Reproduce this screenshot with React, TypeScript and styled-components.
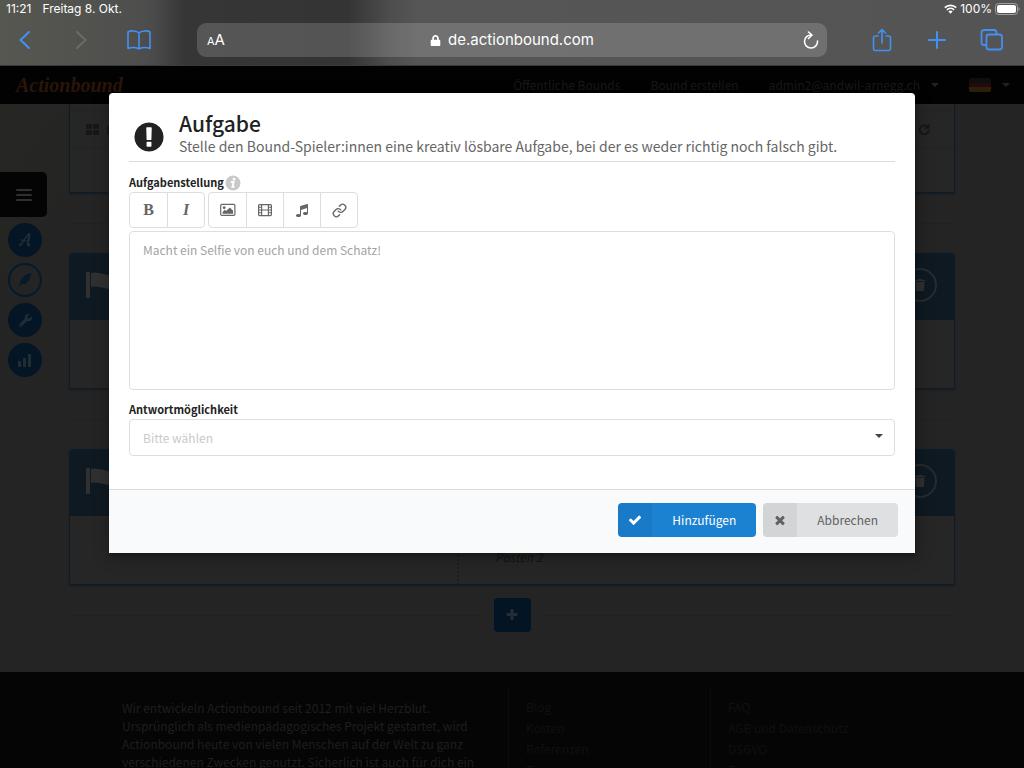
import React from 'react';
import styled, { createGlobalStyle, css } from 'styled-components';
import { FaLock, FaTrash, FaWrench } from 'react-icons/fa';
import { Link as ChainIcon } from 'lucide-react';

const sans = '"Noto Sans CJK SC", "Noto Sans", sans-serif';
const system = 'Inter, "Liberation Sans", sans-serif';

const GlobalStyle = createGlobalStyle`
  *, *::before, *::after { box-sizing: border-box; }
  body { margin: 0; background: #242424; font-family: ${sans}; font-size: 12px; }
  button, input, select, textarea { font: inherit; color: inherit; margin: 0; }
  button { cursor: pointer; padding: 0; border: 0; background: none; }
  a { color: inherit; text-decoration: none; }
  ul { list-style: none; margin: 0; padding: 0; }
  p, h1 { margin: 0; }
`;

const Screen = styled.div`
  display: flex;
  flex-direction: column;
  height: 100vh;
  overflow: hidden;
`;

/* ---------- browser chrome ---------- */

const Chrome = styled.header`
  flex: none;
  font-family: ${system};
  color: #fff;
  background: linear-gradient(
    90deg,
    #56574f 0%,
    #4f504e 13%,
    #4b4b4b 15%,
    #363636 18%,
    #343434 34%,
    #4c4d4c 38%,
    #555655 41%,
    #545454 100%
  );
  border-bottom: 1px solid #3a3a3a;
`;

const StatusBar = styled.div`
  display: flex;
  align-items: center;
  justify-content: space-between;
  height: 18px;
  padding: 0 4px 0 6px;
  font-size: 12px;
  line-height: 18px;
`;

const StatusGroup = styled.div<{ $gap: number }>`
  display: flex;
  align-items: center;
  gap: ${(p) => p.$gap}px;
`;

const Toolbar = styled.div`
  display: grid;
  grid-template-columns: 173px 1fr 165px;
  align-items: center;
  gap: 12px;
  height: 47px;
  padding: 0 20px 4px 12px;
`;

const ToolGroup = styled.div<{ $end?: boolean }>`
  display: flex;
  align-items: center;
  gap: ${(p) => (p.$end ? 30 : 32)}px;
  color: #4390f4;
  justify-content: ${(p) => (p.$end ? 'flex-end' : 'flex-start')};
`;

const ToolButton = styled.button<{ $muted?: boolean }>`
  display: flex;
  align-items: center;
  justify-content: center;
  width: 25px;
  height: 28px;
  color: ${(p) => (p.$muted ? '#6b6b6b' : 'inherit')};
`;

const AddressBar = styled.div`
  display: grid;
  grid-template-columns: 40px 1fr 40px;
  align-items: center;
  height: 34px;
  padding: 0 4px 0 10px;
  border-radius: 9px;
  background: rgba(255, 255, 255, 0.16);

  & > :last-child {
    justify-self: end;
  }
`;

const ReaderButton = styled.button`
  display: flex;
  align-items: baseline;
  font-size: 15px;
  line-height: 34px;
`;

const SmallLetter = styled.span`
  font-size: 11px;
`;

const Address = styled.div`
  display: flex;
  align-items: center;
  justify-content: center;
  gap: 7px;
  padding-right: 6px;
  font-size: 15px;
  line-height: 20px;
`;

/* ---------- dimmed page behind the dialog ---------- */

const Site = styled.div`
  position: relative;
  flex: 1;
  min-height: 0;
  overflow: hidden;
  background: linear-gradient(125deg, #272724 0%, #242424 12%, #242424 100%);
`;

const Nav = styled.nav`
  display: flex;
  align-items: center;
  height: 38px;
  padding: 0 14px 0 16px;
  background: #020202;
  color: #191919;
  font-size: 12px;
  line-height: 18px;
`;

const Brand = styled.a`
  flex: 1;
  color: #2a150a;
  font-family: "Liberation Serif", serif;
  font-size: 20px;
  font-weight: 700;
  font-style: italic;
  line-height: 30px;
`;

const NavItems = styled.div`
  display: flex;
  align-items: center;
  gap: 30px;
`;

const NavButton = styled.button<{ $gap: number }>`
  display: flex;
  align-items: center;
  gap: ${(p) => p.$gap}px;
`;

const Caret = styled.span<{ $color: string }>`
  border: solid transparent;
  border-width: 4px 4px 0;
  border-top-color: ${(p) => p.$color};
`;

const Flag = styled.span`
  width: 22px;
  height: 14px;
  border-radius: 2px;
  background: linear-gradient(#0e0e0e 33%, #25090b 33% 66%, #2c1f09 66%);
`;

const Main = styled.main`
  display: grid;
  grid-template-columns: 69px 1fr 69px;
  height: 568px;
`;

const SideMenu = styled.aside`
  display: flex;
  flex-direction: column;
  align-items: flex-start;
  gap: 6px;
  padding-top: 68px;
`;

const MenuToggle = styled.button`
  display: flex;
  align-items: center;
  justify-content: center;
  width: 47px;
  height: 45px;
  border-radius: 0 5px 5px 0;
  background: #040404;
  color: #303030;
`;

const RoundLink = styled.a<{ $outline?: boolean }>`
  display: flex;
  align-items: center;
  justify-content: center;
  width: 34px;
  height: 34px;
  margin-left: 8px;
  border-radius: 50%;
  ${(p) =>
    p.$outline
      ? css`
          border: 2px solid #051a2c;
          color: #051a2c;
        `
      : css`
          background: #041525;
          color: #222c35;
        `}
`;

const Stages = styled.div`
  min-width: 0;
`;

const Stage = styled.section`
  border: 1px solid #0b1d2c;
  border-radius: 4px 4px 2px 2px;
  box-shadow: 0 1px 2px rgba(0, 0, 0, 0.3);
  background: #262626;
`;

const StageHead = styled.div`
  display: flex;
  align-items: center;
  justify-content: space-between;
  height: 66px;
  padding: 0 17px 4px 16px;
  border-radius: 3px 3px 0 0;
  background: #0e1922;
  color: #303030;
`;

const StageBody = styled.div`
  display: grid;
  grid-template-columns: 387px 1fr;
  height: 68px;
`;

const StageNote = styled.p`
  grid-column: 2;
  padding: 31px 0 0 36px;
  border-left: 2px dotted #1a1d22;
  color: #141414;
  font-size: 12px;
  font-style: italic;
  line-height: 20px;
`;

const RoundButton = styled.button`
  display: flex;
  align-items: center;
  justify-content: center;
  width: 34px;
  height: 34px;
  border: 2px solid #272b2e;
  border-radius: 50%;
`;

const CutStage = styled(Stage)`
  height: 89px;
  padding-top: 6px;
  border-top: 0;
  border-radius: 0 0 2px 2px;
`;

const StageTools = styled.div`
  display: flex;
  align-items: center;
  justify-content: space-between;
  height: 39px;
  padding: 0 24px 0 16px;
  border: solid #222;
  border-width: 1px 0;
  color: #171717;
`;

const ToolLabel = styled.span`
  display: flex;
  align-items: center;
  gap: 7px;
  font-weight: 700;
`;

const Divider = styled.div`
  display: flex;
  align-items: center;
  gap: 13px;
  height: 60px;

  &::before,
  &::after {
    content: "";
    flex: 1;
    border-top: 1px solid #212121;
  }
`;

const SolidDivider = styled(Divider)`
  gap: 0;
`;

const AddButton = styled.button`
  display: flex;
  align-items: center;
  justify-content: center;
  width: 37px;
  height: 34px;
  border-radius: 4px;
  background: #031424;
  color: #262c32;
`;

const Footer = styled.footer`
  display: grid;
  grid-template-columns: 386px 202px 1fr;
  padding: 14px 122px 0;
  background: #050505;
  color: #1e1e1e;
`;

const FooterText = styled.p`
  padding: 13px 20px 0 0;
  font-size: 12px;
  line-height: 18px;
`;

const FooterLinks = styled.ul`
  padding: 10px 0 20px 17px;
  border-left: 1px solid #0b0b0b;
  color: #101010;
  font-size: 12px;
  line-height: 21px;
`;

/* ---------- dialog ---------- */

const Overlay = styled.div`
  position: absolute;
  inset: 0;
  padding: 27px 109px 0;
`;

const Dialog = styled.div`
  border-radius: 4px 4px 0 0;
  background: #fff;
  box-shadow: 1px 3px 3px rgba(0, 0, 0, 0.2), 1px 3px 15px 2px rgba(0, 0, 0, 0.25);
  overflow: hidden;
  color: #222;
`;

const DialogBody = styled.form`
  display: flex;
  flex-direction: column;
  padding: 16px 20px 33px;
`;

const DialogHead = styled.div`
  display: flex;
  align-items: flex-end;
  gap: 11px;
  height: 53px;
  margin-bottom: 12px;
  padding: 0 0 5px 1px;
  border-bottom: 1px solid #dcdcdc;
`;

const DialogIcon = styled.span`
  display: flex;
  align-items: center;
  justify-content: center;
  width: 38px;
  height: 38px;
`;

const DialogTitle = styled.h1`
  font-size: 21px;
  font-weight: 500;
  line-height: 26px;
`;

const DialogText = styled.p`
  color: #666;
  font-size: 14px;
  line-height: 20px;
  white-space: nowrap;
`;

const FieldLabel = styled.label`
  padding-bottom: 2px;
  font-size: 11px;
  font-weight: 700;
  line-height: 16px;
`;

const LabelRow = styled.div`
  display: flex;
  align-items: center;
  gap: 1px;
  height: 18px;
`;

const EditorBar = styled.div`
  display: flex;
  gap: 3px;
  margin: 0 0 3px;
`;

const ButtonGroup = styled.div`
  display: flex;
  border: 1px solid #dededf;
  border-radius: 4px;
`;

const EditorButton = styled.button<{ $italic?: boolean }>`
  display: flex;
  align-items: center;
  justify-content: center;
  width: 37px;
  height: 34px;
  color: #666;
  font: 700 16px/34px "Liberation Serif", serif;
  font-style: ${(p) => (p.$italic ? 'italic' : 'normal')};

  & + & {
    border-left: 1px solid #dededf;
  }
`;

const fieldBox = css`
  width: 100%;
  border: 1px solid #dededf;
  border-radius: 4px;
  background: #fff;
  font-size: 12px;
  outline: 0;
`;

const TaskInput = styled.textarea`
  ${fieldBox}
  display: block;
  height: 159px;
  margin-bottom: 11px;
  padding: 9px 13px;
  line-height: 18px;
  resize: none;

  &::placeholder {
    color: #a3a3a3;
    opacity: 1;
  }
`;

const SelectWrap = styled.div`
  position: relative;
`;

const AnswerSelect = styled.select`
  ${fieldBox}
  height: 37px;
  padding: 0 13px;
  appearance: none;
  color: #cacaca;
  line-height: 18px;
`;

const SelectCaret = styled(Caret)`
  position: absolute;
  top: 15px;
  right: 12px;
  pointer-events: none;
`;

const DialogActions = styled.div`
  display: flex;
  justify-content: flex-end;
  gap: 7px;
  padding: 13px 17px 16px;
  border-top: 1px solid #dcdcdd;
  background: #f9fafb;
`;

const ActionButton = styled.button<{ $primary?: boolean }>`
  display: flex;
  height: 34px;
  border-radius: 4px;
  overflow: hidden;
  background: ${(p) => (p.$primary ? '#1b82d2' : '#dfe0e1')};
  color: ${(p) => (p.$primary ? '#fff' : '#616161')};
  font-size: 12px;
  line-height: 34px;
`;

const ActionIcon = styled.span`
  display: flex;
  align-items: center;
  justify-content: center;
  width: 34px;
  height: 34px;
  background: rgba(0, 0, 0, 0.05);
`;

const ActionText = styled.span`
  padding: 0 20px;
`;

/* ---------- icons ---------- */

const paths = {
  check:
    'M1671 566q0 40-28 68l-724 724-136 136q-28 28-68 28t-68-28l-136-136-362-362q-28-28-28-68t28-68l136-136q28-28 68-28t68 28l294 295 656-657q28-28 68-28t68 28l136 136q28 28 28 68z',
  times:
    'M1490 1322q0 40-28 68l-136 136q-28 28-68 28t-68-28l-294-294-294 294q-28 28-68 28t-68-28l-136-136q-28-28-28-68t28-68l294-294-294-294q-28-28-28-68t28-68l136-136q28-28 68-28t68 28l294 294 294-294q28-28 68-28t68 28l136 136q28 28 28 68t-28 68l-294 294 294 294q28 28 28 68z',
  plus:
    'M1600 736v192q0 40-28 68t-68 28h-416v416q0 40-28 68t-68 28h-192q-40 0-68-28t-28-68v-416h-416q-40 0-68-28t-28-68v-192q0-40 28-68t68-28h416v-416q0-40 28-68t68-28h192q40 0 68 28t28 68v416h416q40 0 68 28t28 68z',
  music:
    'M1664 224v1120q0 50-34 89t-86 60.5-103.5 32-96.5 10.5-96.5-10.5-103.5-32-86-60.5-34-89 34-89 86-60.5 103.5-32 96.5-10.5q105 0 192 39v-537l-768 237v709q0 50-34 89t-86 60.5-103.5 32-96.5 10.5-96.5-10.5-103.5-32-86-60.5-34-89 34-89 86-60.5 103.5-32 96.5-10.5q105 0 192 39v-967q0-31 19-56.5t49-35.5l832-256q12-4 28-4 40 0 68 28t28 68z',
  alert:
    'M896 128q209 0 385.5 103t279.5 279.5 103 385.5-103 385.5-279.5 279.5-385.5 103-385.5-103-279.5-279.5-103-385.5 103-385.5 279.5-279.5 385.5-103zm128 1247v-190q0-14-9-23.5t-22-9.5h-192q-13 0-23 10t-10 23v190q0 13 10 23t23 10h192q13 0 22-9.5t9-23.5zm-2-344l18-621q0-12-10-18-10-8-24-8h-220q-14 0-24 8-10 6-10 18l17 621q0 10 10 17.5t24 7.5h185q14 0 23.5-7.5t10.5-17.5z',
};

const Glyph = ({ name, size }: { name: keyof typeof paths; size: number }) => (
  <svg width={size} height={size} viewBox="0 0 1792 1792" fill="currentColor" aria-hidden="true">
    <path d={paths[name]} />
  </svg>
);

const Line = ({ w, h, d, s = 2 }: { w: number; h: number; d: string; s?: number }) => (
  <svg
    width={w}
    height={h}
    viewBox={`0 0 ${w} ${h}`}
    fill="none"
    stroke="currentColor"
    strokeWidth={s}
    strokeLinecap="round"
    strokeLinejoin="round"
    aria-hidden="true"
  >
    <path d={d} />
  </svg>
);

const PictureIcon = () => (
  <svg width="16" height="14" viewBox="0 0 16 14" fill="currentColor" aria-hidden="true">
    <rect x="0.7" y="1.4" width="14.2" height="11" rx="1.2" fill="none" stroke="currentColor" strokeWidth="1.2" />
    <circle cx="4.2" cy="4.7" r="1.4" />
    <path d="M2.6 10.8V9l2.3-2.3 1.3 1.3 3.6-3.6 3.3 3.3v3.1z" />
  </svg>
);

const FilmIcon = () => (
  <svg width="14" height="14" viewBox="0 0 14 14" fill="none" stroke="currentColor" aria-hidden="true">
    <rect x="0.6" y="1.6" width="12.8" height="11" rx="1" strokeWidth="1.2" />
    <path d="M3.600 1.600v11M10.400 1.600v11M3.600 7h6.800" strokeWidth="1.2" />
    <path d="M1 4.300h2.600M1 7h2.600M1 9.800h2.600M10.400 4.300H13M10.400 7H13M10.400 9.800H13" strokeWidth="1.1" />
  </svg>
);

const InfoIcon = () => (
  <svg width="16" height="16" viewBox="0 0 16 16" aria-hidden="true">
    <circle cx="8" cy="8" r="7.5" fill="#c9c9c9" />
    <circle cx="9" cy="4.2" r="1.4" fill="#fff" />
    <path d="M6.600 7h2L7.500 11.800h1.300" fill="none" stroke="#fff" strokeWidth="1.900" strokeLinecap="round" />
  </svg>
);

const FlagIcon = () => (
  <svg width="46" height="28" viewBox="0 0 46 28" fill="currentColor" aria-hidden="true">
    <rect x="0" y="1" width="4" height="26" rx="1" />
    <path d="M5 2c7-2 13 2 20 2 5 0 9-1 15-4v14c-6 3-10 4-15 4-7 0-13-4-20-2z" />
  </svg>
);

const ScriptMarkIcon = () => (
  <svg width="14" height="14" viewBox="0 0 14 14" fill="none" stroke="currentColor" strokeLinecap="round" aria-hidden="true">
    <path d="M11.500 1C8 2.500 5.500 8 3.500 11.500 2.500 13 1 12 1.800 10.800" strokeWidth="1.500" />
    <path d="M11.500 1L9.800 11.500q0 1.500 1.700.3" strokeWidth="2.200" />
    <path d="M3 6.500c1.500 1.500 5 1.500 7.500.5" strokeWidth="1.300" />
  </svg>
);

const QuillIcon = () => (
  <svg width="14" height="14" viewBox="0 0 14 14" fill="currentColor" aria-hidden="true">
    <path d="M13.500.3C8.500.8 3.800 3.800 2.600 8.300L2.300 10.300.3 13.200l.8.5 2.300-2.700c3.200.3 5.300-.6 6.700-2.500L8 8.300l3-1.100c.5-.8.900-1.700 1.200-2.600l-2 .1 2.500-1.500z" />
  </svg>
);

const WifiIcon = () => (
  <svg width="13" height="10" viewBox="0 0 13 10" fill="none" stroke="#fff" strokeWidth="1.7" aria-hidden="true">
    <path d="M0.8 3.6a8.2 8.2 0 0 1 11.4 0M2.9 5.8a5.2 5.2 0 0 1 7.2 0" />
    <path d="M6.5 9.8L4.4 7.6a3 3 0 0 1 4.2 0z" fill="#fff" stroke="none" />
  </svg>
);

const BatteryIcon = () => (
  <svg width="25" height="12" viewBox="0 0 25 12" aria-hidden="true">
    <rect x="0.5" y="0.5" width="22" height="11" rx="3" fill="none" stroke="#a0a0a0" />
    <rect x="2" y="2" width="19" height="8" rx="2" fill="#fff" />
    <path d="M23.5 4v4c1.4-.7 1.4-3.300 0-4z" fill="#a0a0a0" />
  </svg>
);

const GridIcon = () => (
  <svg width="13" height="11" viewBox="0 0 13 11" fill="currentColor" aria-hidden="true">
    <rect width="6" height="5" rx="1" />
    <rect x="7" width="6" height="5" rx="1" />
    <rect y="6" width="6" height="5" rx="1" />
    <rect x="7" y="6" width="6" height="5" rx="1" />
  </svg>
);

const BarsIcon = () => (
  <svg width="14" height="13" viewBox="0 0 14 13" fill="currentColor" aria-hidden="true">
    <rect x="0" y="7" width="3" height="6" rx="0.5" />
    <rect x="5" y="4" width="3" height="9" rx="0.5" />
    <rect x="10" y="0" width="3" height="13" rx="0.5" />
  </svg>
);

const StageCard = ({ note }: { note?: string }) => (
  <Stage>
    <StageHead>
      <FlagIcon />
      <RoundButton type="button" aria-label="Löschen">
        <FaTrash size={12} />
      </RoundButton>
    </StageHead>
    <StageBody>{note && <StageNote>{note}</StageNote>}</StageBody>
  </Stage>
);

export default function App() {
  return (
    <>
      <GlobalStyle />
      <Screen>
        <Chrome>
          <StatusBar>
            <StatusGroup $gap={11}>
              <span>11:21</span>
              <span>Freitag 8. Okt.</span>
            </StatusGroup>
            <StatusGroup $gap={3}>
              <WifiIcon />
              <span>100%</span>
              <BatteryIcon />
            </StatusGroup>
          </StatusBar>
          <Toolbar>
            <ToolGroup>
              <ToolButton type="button" aria-label="Zurück">
                <Line w={11} h={18} d="M10 1L1.500 9l8.500 8" />
              </ToolButton>
              <ToolButton type="button" aria-label="Vorwärts" $muted>
                <Line w={11} h={18} d="M1 1l8.500 8L1 17" />
              </ToolButton>
              <ToolButton type="button" aria-label="Lesezeichen">
                <Line
                  w={24}
                  h={20}
                  s={1.6}
                  d="M12 3C10 .6 3.500 .3 1 2v16.500c3-1.500 9-1.500 11 .5 2-2 8-2 11-.5V2C20.500 .3 14 .6 12 3zM12 3v16"
                />
              </ToolButton>
            </ToolGroup>
            <AddressBar>
              <ReaderButton type="button">
                <SmallLetter>A</SmallLetter>A
              </ReaderButton>
              <Address>
                <FaLock size={11} />
                <span>de.actionbound.com</span>
              </Address>
              <ToolButton type="button" aria-label="Neu laden">
                <Line w={16} h={18} s={1.6} d="M8.500 4A6.500 6.500 0 1 0 14.500 10M5.500 1l3.500 3-3.500 3.500" />
              </ToolButton>
            </AddressBar>
            <ToolGroup $end>
              <ToolButton type="button" aria-label="Teilen">
                <Line
                  w={20}
                  h={24}
                  s={1.6}
                  d="M6 8H3.500Q1.500 8 1.500 10v10.500q0 2 2 2h13q2 0 2-2V10q0-2-2-2H14M10 15V1.500M6.500 5L10 1.500 13.500 5"
                />
              </ToolButton>
              <ToolButton type="button" aria-label="Neuer Tab">
                <Line w={18} h={18} d="M9 1v16M1 9h16" />
              </ToolButton>
              <ToolButton type="button" aria-label="Tabs">
                <Line
                  w={24}
                  h={24}
                  s={1.8}
                  d="M6 17H4q-2.500 0-2.500-2.500V4.500Q1.500 2 4 2h10q2.500 0 2.500 2.500V6M9 6.500h10.500q2.500 0 2.500 2.500v10q0 2.500-2.500 2.500H9q-2.500 0-2.500-2.500V9q0-2.500 2.500-2.500z"
                />
              </ToolButton>
            </ToolGroup>
          </Toolbar>
        </Chrome>

        <Site>
          <Nav>
            <Brand href="#start">Actionbound</Brand>
            <NavItems>
              <a href="#bounds">Öffentliche Bounds</a>
              <a href="#create">Bound erstellen</a>
              <NavButton type="button" $gap={11}>
                admin2@andwil-arnegg.ch
                <Caret $color="#222" />
              </NavButton>
              <NavButton type="button" $gap={11} aria-label="Sprache">
                <Flag />
                <Caret $color="#222" />
              </NavButton>
            </NavItems>
          </Nav>

          <Main>
            <SideMenu>
              <MenuToggle type="button" aria-label="Menü">
                <Line w={18} h={14} d="M2 2h14M2 7h14M2 12h14" />
              </MenuToggle>
              <RoundLink href="#overview" aria-label="Übersicht">
                <ScriptMarkIcon />
              </RoundLink>
              <RoundLink href="#edit" $outline aria-label="Bearbeiten">
                <QuillIcon />
              </RoundLink>
              <RoundLink href="#settings" aria-label="Einstellungen">
                <FaWrench size={13} />
              </RoundLink>
              <RoundLink href="#stats" aria-label="Statistik">
                <BarsIcon />
              </RoundLink>
            </SideMenu>
            <Stages>
              <CutStage>
                <StageTools>
                  <ToolLabel>
                    <GridIcon />N
                  </ToolLabel>
                  <Line w={12} h={12} d="M10 3.500A4.500 4.500 0 1 0 10.500 7M10.500 1v3h-3" />
                </StageTools>
              </CutStage>
              <SolidDivider />
              <StageCard />
              <SolidDivider />
              <StageCard note="Posten 2" />
              <Divider>
                <AddButton type="button" aria-label="Element hinzufügen">
                  <Glyph name="plus" size={14} />
                </AddButton>
              </Divider>
            </Stages>
          </Main>

          <Footer>
            <FooterText>
              Wir entwickeln Actionbound seit 2012 mit viel Herzblut. Ursprünglich als
              medienpädagogisches Projekt gestartet, wird Actionbound heute von vielen Menschen auf
              der Welt zu ganz verschiedenen Zwecken genutzt. Sicherlich ist auch für dich ein
            </FooterText>
            <FooterLinks>
              <li><a href="#blog">Blog</a></li>
              <li><a href="#costs">Kosten</a></li>
              <li><a href="#references">Referenzen</a></li>
              <li><a href="#team">Team</a></li>
            </FooterLinks>
            <FooterLinks>
              <li><a href="#faq">FAQ</a></li>
              <li><a href="#terms">AGB und Datenschutz</a></li>
              <li><a href="#dsgvo">DSGVO</a></li>
              <li><a href="#forum">Forum</a></li>
            </FooterLinks>
          </Footer>

          <Overlay>
            <Dialog role="dialog" aria-modal="true" aria-labelledby="dialog-title">
              <DialogBody id="task-form">
                <DialogHead>
                  <DialogIcon>
                    <Glyph name="alert" size={34} />
                  </DialogIcon>
                  <div>
                    <DialogTitle id="dialog-title">Aufgabe</DialogTitle>
                    <DialogText>
                      Stelle den Bound-Spieler:innen eine kreativ lösbare Aufgabe, bei der es weder
                      richtig noch falsch gibt.
                    </DialogText>
                  </div>
                </DialogHead>
                <LabelRow>
                  <FieldLabel htmlFor="task">Aufgabenstellung</FieldLabel>
                  <InfoIcon />
                </LabelRow>
                <EditorBar>
                  <ButtonGroup>
                    <EditorButton type="button">B</EditorButton>
                    <EditorButton type="button" $italic>I</EditorButton>
                  </ButtonGroup>
                  <ButtonGroup>
                    <EditorButton type="button" aria-label="Bild"><PictureIcon /></EditorButton>
                    <EditorButton type="button" aria-label="Video"><FilmIcon /></EditorButton>
                    <EditorButton type="button" aria-label="Audio"><Glyph name="music" size={14} /></EditorButton>
                    <EditorButton type="button" aria-label="Link"><ChainIcon size={15} strokeWidth={2.2} /></EditorButton>
                  </ButtonGroup>
                </EditorBar>
                <TaskInput id="task" placeholder="Macht ein Selfie von euch und dem Schatz!" />
                <FieldLabel htmlFor="answer">Antwortmöglichkeit</FieldLabel>
                <SelectWrap>
                  <AnswerSelect id="answer" defaultValue="">
                    <option value="">Bitte wählen</option>
                  </AnswerSelect>
                  <SelectCaret $color="#444" />
                </SelectWrap>
              </DialogBody>
              <DialogActions>
                <ActionButton type="submit" form="task-form" $primary>
                  <ActionIcon><Glyph name="check" size={14} /></ActionIcon>
                  <ActionText>Hinzufügen</ActionText>
                </ActionButton>
                <ActionButton type="button">
                  <ActionIcon><Glyph name="times" size={14} /></ActionIcon>
                  <ActionText>Abbrechen</ActionText>
                </ActionButton>
              </DialogActions>
            </Dialog>
          </Overlay>
        </Site>
      </Screen>
    </>
  );
}
